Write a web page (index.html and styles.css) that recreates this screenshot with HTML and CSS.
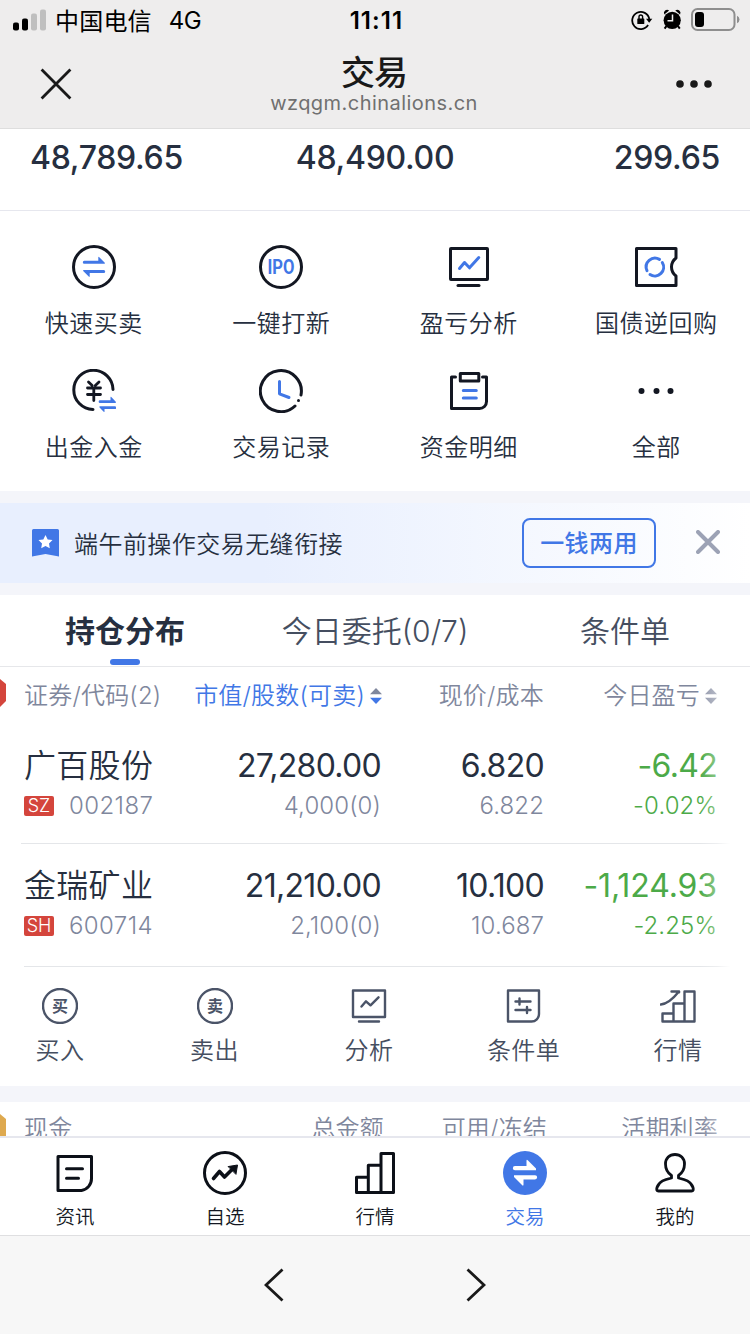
FILE: index.html
```
<!DOCTYPE html>
<html lang="zh-CN">

<head>
<meta charset="utf-8">
<meta name="viewport" content="width=750">
<title>交易</title>
<link rel="stylesheet" href="styles.css">
</head>

<body>
    <header class="top">
        <div class="status">
            <div class="carrier">
                <svg width="34" height="22" viewBox="0 0 34 22"><rect x="0" y="13.5" width="6" height="8" rx="2"/><rect x="9" y="9.5" width="6" height="12" rx="2"/><g fill="#bfbfbf"><rect x="18" y="4.5" width="6" height="17" rx="2"/><rect x="27" y="0.5" width="6" height="21" rx="2"/></g></svg>
                <span class="isp">中国电信</span>
                <span class="net">4G</span>
            </div>
            <div class="time">11:11</div>
            <div class="sysicons">
                <svg width="109" height="24" viewBox="0 0 109 24">
                    <g fill="none" stroke="#000" stroke-width="1.8"><path d="M17.1 17.1A8.6 8.6 0 1 1 18.3 11"/><path d="M8 11V8.8a1.7 1.7 0 0 1 3.6 0V11" stroke-width="1.4"/></g>
                    <path d="M15 10.7h6.3l-3.1 4z"/><rect x="6.3" y="10.5" width="7" height="5.5" rx="0.6"/>
                    <circle cx="41.2" cy="12.3" r="8.6"/><path d="M33.3 6.5a3.2 3.2 0 0 1 4.8-4zM49.1 6.5a3.2 3.2 0 0 0-4.8-4z"/>
                    <path d="M35.4 18.2l-1.8 2.4M47 18.2l1.8 2.4" stroke="#000" stroke-width="2"/>
                    <path d="M41.5 6.5v6.2h-5" fill="none" stroke="#eee" stroke-width="1.5"/>
                    <rect x="61" y="1" width="42.5" height="21" rx="5.5" fill="none" stroke="#8e8e8e" stroke-width="2"/>
                    <rect x="64" y="4" width="9" height="15" rx="3"/><path d="M106 7.7q2.5 1.3 2.5 3.8t-2.5 3.8z" fill="#8e8e8e"/>
                </svg>
            </div>
        </div>
        <div class="nav">
            <svg class="close" width="32" height="32" viewBox="0 0 32 32"><path d="M1.6 1.6l28.8 28.8M30.4 1.6L1.6 30.4"/></svg>
            <div class="heading">
                <h1>交易</h1>
                <p>wzqgm.chinalions.cn</p>
            </div>
            <svg class="more" width="36" height="8" viewBox="0 0 36 8"><circle cx="4" cy="4" r="3.8"/><circle cx="18" cy="4" r="3.8"/><circle cx="32" cy="4" r="3.8"/></svg>
        </div>
    </header>

    <main>
        <section class="funds"><span>48,789.65</span><span>48,490.00</span><span>299.65</span></section>

        <section class="tools">
            <a class="tool">
                <svg viewBox="0 0 44 44"><circle cx="22" cy="22" r="20.5"/><g class="bluefill"><path d="M12.3 15.800h14v-3.200q0-1.400 1-.400l5.500 5.600v1h-20.500a1.500 1.500 0 0 1 0-3z"/><path d="M31.700 28h-14v3.200q0 1.400-1 .4l-5.500-5.600v-1h20.500a1.500 1.500 0 0 1 0 3z"/></g></svg>
                <span>快速买卖</span>
            </a>
            <a class="tool">
                <svg viewBox="0 0 44 44"><circle cx="22" cy="22" r="20.500"/><text class="ipo" x="22" y="29" text-anchor="middle" textLength="27" lengthAdjust="spacingAndGlyphs">IPO</text></svg>
                <span>一键打新</span>
            </a>
            <a class="tool">
                <svg viewBox="0 0 44 44"><rect x="3.500" y="3.500" width="37" height="31" rx="0.500"/><path d="M11 40.500h21"/><path class="blue" d="M12.500 23.500l5-6 5 5.300 9.300-10.300"/></svg>
                <span>盈亏分析</span>
            </a>
            <a class="tool">
                <svg viewBox="0 0 44 44"><path d="M42 11.800V3.500H2.500v37H42V31q-4.500-3.500-4.500-9t4.500-9z"/><g class="blue"><path d="M25.500 14.400a8.800 8.800 0 0 0-12.500 11.200"/><path d="M28.300 17.500a8.800 8.800 0 0 1-12.300 12"/></g></svg>
                <span>国债逆回购</span>
            </a>
            <a class="tool">
                <svg viewBox="0 0 44 44"><path d="M41 20.500A19.600 19.600 0 1 0 21 40.500"/><path d="M16.500 13l3.700 3.500M27 13l-3.700 3.500M15.500 19h13M15.500 25.500h13M21.800 19v12.500" stroke-width="2.800"/><g class="bluefill"><path d="M28 31.300h10.500v-3q0-1 .8-.3l4.500 4.800v1.200H28a1.300 1.300 0 0 1 0-2.700z"/><path d="M43 40h-10.500v2.500q0 1-.8.3L27.500 38.500v-1.200H43a1.300 1.300 0 0 1 0 2.700z"/></g></svg>
                <span>出金入金</span>
            </a>
            <a class="tool">
                <svg viewBox="0 0 44 44"><path d="M42 26A20.500 20.500 0 1 0 36 37"/><circle cx="39.500" cy="31.500" r="1.500" class="dot"/><path class="blue" d="M20.500 12.500v12.300l9.500 3.700"/></svg>
                <span>交易记录</span>
            </a>
            <a class="tool">
                <svg viewBox="0 0 44 44"><path d="M8.500 8H4.500v31.500h28a7 7 0 0 0 7-7V8h-4"/><rect x="13.300" y="4.500" width="18.500" height="7.500"/><path class="blue" d="M16.300 21.500h13M16.300 29h13"/></svg>
                <span>资金明细</span>
            </a>
            <a class="tool">
                <svg viewBox="0 0 44 44"><g class="dot"><circle cx="7.500" cy="22" r="3"/><circle cx="22.500" cy="22" r="3"/><circle cx="36.500" cy="22" r="3"/></g></svg>
                <span>全部</span>
            </a>
        </section>

        <section class="notice">
            <svg width="27" height="28" viewBox="0 0 27 28"><path d="M1.500 0h24Q27 0 27 1.500V27.500L13.500 25 0 27.500V1.500Q0 0 1.500 0z" fill="#4177e6"/><path d="M13.500 6l2.200 4.400 4.800.7-3.500 3.400.8 4.800-4.300-2.300-4.300 2.300.8-4.800L6.500 11.100l4.800-.7z" fill="#fff"/></svg>
            <p>端午前操作交易无缝衔接</p>
            <button>一钱两用</button>
            <svg class="dismiss" width="24" height="24" viewBox="0 0 24 24"><path d="M2 2l20 20M22 2L2 22"/></svg>
        </section>

        <nav class="tabs">
            <a class="on">持仓分布</a>
            <a>今日委托(0/7)</a>
            <a>条件单</a>
        </nav>

        <section class="holdings">
            <svg class="flag" width="6" height="28" viewBox="0 0 6 28"><path d="M0 0l6 5v17l-6 6z" fill="#d4453c"/></svg>
            <div class="cols labels">
                <span>证券/代码(2)</span>
                <span class="sorted">市值/股数(可卖)<svg width="12" height="16" viewBox="0 0 12 16"><path d="M0 6.300L6 0l6 6.300z" fill="#7f879d"/><path d="M0 9.700L6 16l6-6.300z" fill="#4177e6"/></svg></span>
                <span>现价/成本</span>
                <span>今日盈亏<svg width="12" height="16" viewBox="0 0 12 16"><path d="M0 6.300L6 0l6 6.300zM0 9.700L6 16l6-6.300z" fill="#8e94a8"/></svg></span>
            </div>
            <div class="cols stock">
                <div><b>广百股份</b><small><i>SZ</i>002187</small></div>
                <div><b>27,280.00</b><small>4,000(0)</small></div>
                <div><b>6.820</b><small>6.822</small></div>
                <div class="down"><b>-6.42</b><small>-0.02%</small></div>
            </div>
            <div class="cols stock">
                <div><b>金瑞矿业</b><small><i>SH</i>600714</small></div>
                <div><b>21,210.00</b><small>2,100(0)</small></div>
                <div><b>10.100</b><small>10.687</small></div>
                <div class="down"><b class="long">-1,124.93</b><small>-2.25%</small></div>
            </div>
            <div class="actions">
                <a><svg viewBox="0 0 36 36"><circle cx="18" cy="18" r="17"/><text x="18" y="23.800" text-anchor="middle">买</text></svg>买入</a>
                <a><svg viewBox="0 0 36 36"><circle cx="18" cy="18" r="17"/><text x="18" y="23.800" text-anchor="middle">卖</text></svg>卖出</a>
                <a><svg viewBox="0 0 36 36"><rect x="2" y="2.500" width="32" height="26.500"/><path d="M8 33.500h20M10.500 18.500l4.500-5.200 4.500 4 8-8"/></svg>分析</a>
                <a><svg viewBox="0 0 36 36"><path d="M2 2.500h31v23.500a7.500 7.500 0 0 1-7.500 7.500H2zM9.500 13.500h15M13.500 10.500v6M9.500 22h15M21 19v6"/></svg>条件单</a>
                <a><svg viewBox="0 0 36 36"><path d="M2.500 33.500v-8h11M2.500 33.500h32v-30H24.500v30M13.500 33.500v-18h11M.8 16.500Q9 15.800 18.500 4M11.500 3.500h7.600v.8"/></svg>行情</a>
            </div>
        </section>

        <section class="cash">
            <svg class="flag" width="6" height="24" viewBox="0 0 6 24"><path d="M0 0l6 5v19H0z" fill="#dea94f"/></svg>
            <div class="cols labels"><span>现金</span><span>总金额</span><span>可用/冻结</span><span>活期利率</span></div>
        </section>
    </main>

    <nav class="tabbar">
        <a><svg viewBox="0 0 44 44"><path d="M5 5.500h33.500v22a12 12 0 0 1-10 12H5zM13.500 17.800h16M13.500 27.300h12"/></svg>资讯</a>
        <a><svg viewBox="0 0 44 44"><circle cx="22" cy="22" r="20.500"/><path d="M10.500 27.500l6-7 5 5.500 8-8" stroke-width="3.600"/><path d="M25.500 15.500l9-1.500-1.500 9z" class="solid"/></svg>自选</a>
        <a><svg viewBox="0 0 44 44"><path d="M3.500 41.500V26.300H15M15.300 41.500V14.300h12.500M3.500 41.500h37V2.500H28v39"/></svg>行情</a>
        <a class="on"><svg viewBox="0 0 44 44"><circle cx="22" cy="22" r="22" class="disc"/><g class="white"><path d="M12 15h11.500v-5q0-2 1.500-.5l8 8v1.800H12a2 2 0 0 1 0-4.300z"/><path d="M32 28.500h-11.500v5q0 2-1.500.5l-8-8v-1.800h21a2 2 0 0 1 0 4.300z"/></g></svg>交易</a>
        <a><svg viewBox="0 0 44 44"><path d="M18.500 27v-2.500Q12.500 20.500 12.500 13c0-5.700 4-9.500 9.500-9.500s9.500 3.800 9.500 9.500q0 7.500-6 11.500V27C32 28.500 38 30 40 36.500q1 3.500-1.500 3.500h-33q-2.500 0-1.500-3.500C6 30 12 28.500 18.500 27z" stroke-width="2.800"/></svg>我的</a>
    </nav>

    <footer class="browser">
        <svg width="20" height="34" viewBox="0 0 20 34"><path d="M18.500 1.500L2 17l16.500 15.500"/></svg>
        <svg width="20" height="34" viewBox="0 0 20 34"><path d="M1.500 1.500L18 17 1.500 32.500"/></svg>
    </footer>
</body>

</html>
```
FILE: styles.css
```
* {
    box-sizing:border-box;
}

body {
    margin:0;
    width:750px;
    height:1334px;
    overflow:hidden;
    display:flex;
    flex-direction:column;
    background-color:white;
    font-family:Inter, 'Noto Sans CJK SC', sans-serif;
    font-size:24px;
    font-weight:400;
    color:#262f40;
}

h1, p {
    margin:0;
}

svg {
    display:block;
    flex:none;
}

.top {
    height:129px;
    flex:none;
    background-color:#eeeded;
    border-bottom:1px solid #dedede;
    color:black;
}

.status {
    display:grid;
    grid-template-columns:1fr 80px 1fr;
    height:40px;
    align-items:center;
    padding:0 10px 0 13px;
}

.carrier {
    display:flex;
    align-items:center;
    line-height:40px;
}

.isp {
    margin-left:8px;
    padding-top:3px;
    line-height:37px;
    letter-spacing:0.2px;
}

.net {
    margin-left:17px;
    padding-top:2px;
    line-height:38px;
    letter-spacing:-0.5px;
}

.time {
    padding-top:1px;
    text-align:center;
    font-weight:600;
    font-size:24px;
    letter-spacing:1.1px;
}

.sysicons {
    justify-self:end;
}

.nav {
    display:grid;
    grid-template-columns:98px 1fr 102px;
    height:88px;
    padding:0 38px 0 40px;
    align-items:center;
}

.close {
    stroke:#191919;
    stroke-width:2.8;
}

.heading {
    text-align:center;
    padding-top:5px;
    height:88px;
}

.heading h1 {
    font-size:34px;
    font-weight:500;
    line-height:56px;
    height:48px;
    letter-spacing:-1px;
    color:#191919;
}

.heading p {
    font-size:20px;
    line-height:20px;
    letter-spacing:0.45px;
    color:#707070;
}

.more {
    justify-self:end;
    fill:#191919;
}

main {
    height:1007px;
    flex:none;
    overflow:hidden;
    background-color:#f4f5fa;
}

.funds {
    height:82px;
    display:grid;
    grid-template-columns:1fr 1fr 1fr;
    padding:1px 30px 0;
    font-size:32px;
    font-weight:450;
    line-height:56px;
    letter-spacing:-0.3px;
    background-color:white;
    border-bottom:1px solid #e6e7ee;
}

.funds span:nth-child(2) {
    text-align:center;
}

.funds span:nth-child(3) {
    text-align:right;
}

.tools {
    height:280px;
    display:grid;
    grid-template-columns:repeat(4, 1fr);
    grid-auto-rows:95px;
    row-gap:29px;
    padding-top:34px;
    background-color:white;
}

.tool {
    display:flex;
    flex-direction:column;
    align-items:center;
    gap:18px;
    line-height:34px;
    letter-spacing:0.5px;
    font-weight:350;
}

.tool svg {
    width:44px;
    height:44px;
    fill:none;
    stroke:#131722;
    stroke-width:3;
    stroke-linecap:round;
    stroke-linejoin:round;
}

.tool .blue {
    stroke:#4177e6;
}

.tool .bluefill {
    fill:#4177e6;
    stroke:none;
}

.tool .dot {
    fill:#131722;
    stroke:none;
}

.ipo {
    fill:#4177e6;
    stroke:none;
    font-family:Roboto, sans-serif;
    font-size:19.5px;
    font-weight:700;
    letter-spacing:0;
}

.notice {
    height:80px;
    margin:12px 0;
    padding:0 30px 0 32px;
    display:flex;
    align-items:center;
    font-weight:350;
    background:linear-gradient(to right, #e8effe 35%, #fff);
}

.notice p {
    margin:0 0 2px 15px;
    letter-spacing:0.45px;
}

.notice button {
    width:134px;
    height:50px;
    margin-left:auto;
    padding:0 0 3px;
    font:500 24px Inter, 'Noto Sans CJK SC', sans-serif;
    letter-spacing:0.4px;
    color:#4177e6;
    background:none;
    border:2px solid #4177e6;
    border-radius:8px;
}

.dismiss {
    margin:0 0 2px 40px;
    stroke:#9ca2b5;
    stroke-width:4;
    stroke-linecap:round;
}

.tabs {
    display:grid;
    grid-template-columns:1fr 1fr 1fr;
    height:72px;
    background-color:white;
    border-bottom:1px solid #e6e7ea;
    font-size:30px;
    font-weight:350;
    line-height:72px;
    text-align:center;
    color:#454e60;
}

.tabs .on {
    position:relative;
    font-weight:700;
    color:#262f40;
}

.tabs .on:after {
    content:'';
    position:absolute;
    left:110px;
    bottom:2px;
    width:30px;
    height:6px;
    border-radius:3px;
    background-color:#4177e6;
}

.holdings {
    position:relative;
    height:419px;
    background-color:white;
}

/* white fade where the table scrolls off to the right */
.holdings:after, .cash:after {
    content:'';
    position:absolute;
    top:0;
    bottom:0;
    right:0;
    width:50px;
    background:linear-gradient(to right, rgba(255,255,255,0), rgba(255,255,255,0.35) 17px, #fff 30px);
}

.flag {
    position:absolute;
    left:0;
    top:12px;
}

.cols {
    display:grid;
    grid-template-columns:160px 197px 163px 173px;
    padding-left:24px;
}

.cols > * {
    text-align:right;
}

.cols > :first-child {
    text-align:left;
}

.labels {
    height:57px;
    line-height:57px;
    font-weight:350;
    color:#7f879d;
    letter-spacing:0.2px;
}

.labels span {
    display:flex;
    align-items:center;
    justify-content:flex-end;
    white-space:nowrap;
}

.labels span:first-child {
    justify-content:flex-start;
}

.labels svg {
    margin-left:5px;
}

.labels .sorted {
    margin-right:-1px;
    color:#4177e6;
}

.stock {
    position:relative;
    padding-top:19px;
    height:119px;
}

.stock:after {
    content:'';
    position:absolute;
    left:21px;
    right:0;
    bottom:0;
    height:1px;
    background-color:#e4e6e9;
}

.labels + .stock {
    height:120px;
}

.stock + .stock {
    height:123px;
}

.stock + .stock:after {
    left:24px;
}

.stock b {
    display:block;
    font-size:32px;
    font-weight:400;
    line-height:46px;
    letter-spacing:-0.7px;
}

.stock .long {
    letter-spacing:-0.1px;
}

.stock div:first-child b {
    font-weight:350;
    letter-spacing:0.3px;
}

.stock small {
    display:block;
    margin-top:1px;
    font-size:24px;
    font-weight:350;
    line-height:32px;
    letter-spacing:0.1px;
    color:#7f879d;
}

.stock div:first-child small {
    letter-spacing:0.4px;
}

.stock i {
    display:inline-block;
    width:30px;
    height:20px;
    margin-right:15px;
    border-radius:2px;
    background-color:#d4453c;
    color:white;
    font-size:18px;
    font-style:normal;
    line-height:20px;
    letter-spacing:0;
    text-align:center;
    vertical-align:2px;
}

.stock .down, .down small {
    color:#4caa48;
}

.stock .down small {
    color:#4caa48;
}

.actions {
    display:flex;
    justify-content:space-between;
    padding:21px 27px 0 15px;
}

.actions a {
    width:90px;
    display:flex;
    flex-direction:column;
    align-items:center;
    gap:10px;
    font-weight:350;
    line-height:34px;
    letter-spacing:0.4px;
    color:#454e60;
}

.actions svg {
    width:36px;
    height:36px;
    fill:none;
    stroke:#4b5468;
    stroke-width:2.4;
    stroke-linecap:round;
    stroke-linejoin:round;
}

.actions text {
    fill:#4b5468;
    stroke:none;
    font-size:16px;
    font-weight:700;
    letter-spacing:0;
}

.cash {
    position:relative;
    height:34px;
    margin-top:16px;
    overflow:hidden;
    background-color:white;
}

.cash .labels {
    height:54px;
    line-height:54px;
    grid-template-columns:160px 200px 163px 171px;
}

.tabbar {
    display:grid;
    grid-template-columns:repeat(5, 1fr);
    height:99px;
    flex:none;
    padding-top:13px;
    border-top:2px solid #e6e7ee;
    background-color:white;
}

.tabbar a {
    display:flex;
    flex-direction:column;
    align-items:center;
    gap:7px;
    font-size:19.5px;
    font-weight:350;
    line-height:30px;
    color:#131722;
}

.tabbar .on {
    color:#4177e6;
}

.tabbar svg {
    width:44px;
    height:44px;
    fill:none;
    stroke:#0c1018;
    stroke-width:3;
    stroke-linecap:round;
    stroke-linejoin:round;
}

.tabbar .solid {
    fill:#0c1018;
    stroke-width:1;
}

.tabbar .disc {
    fill:#4177e6;
    stroke:none;
}

.tabbar .white {
    fill:white;
    stroke:none;
}

.browser {
    flex:1;
    display:flex;
    align-items:center;
    justify-content:center;
    gap:182px;
    background-color:#f7f7f7;
    border-top:1px solid #dfdfe1;
}

.browser svg {
    fill:none;
    stroke:#191919;
    stroke-width:2.8;
}
```
